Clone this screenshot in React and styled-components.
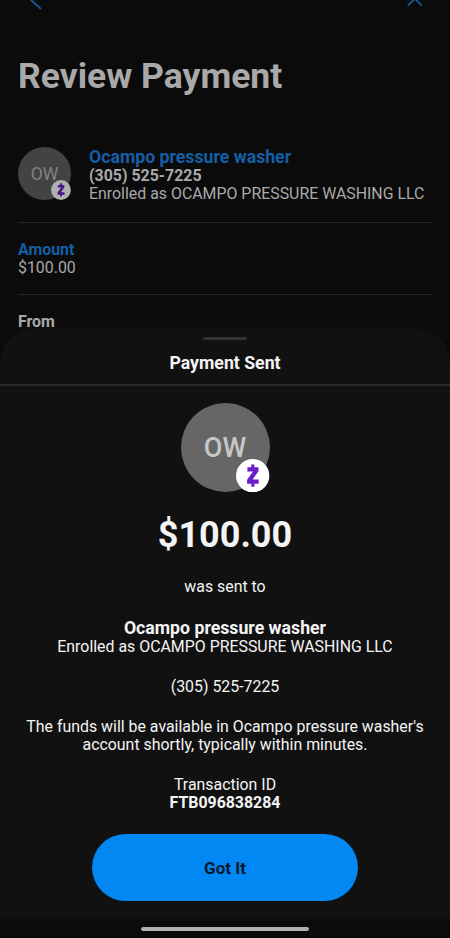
import React from "react";
import styled, { createGlobalStyle } from "styled-components";

const GlobalStyle = createGlobalStyle`
  * { box-sizing: border-box; }
  body { margin: 0; background: #0b0b0b; font-family: Roboto, sans-serif; }
  h1, h2, h3, p { margin: 0; }
`;

const Screen = styled.div`
  width: 450px;
  height: 938px;
  display: grid;
  grid-template-rows: 328px 591px 19px;
  background: #0b0b0b;
  overflow: hidden;
`;

const Review = styled.main`
  padding: 0 18px;
  color: #a9a9a9;
  overflow: hidden;
`;

const NavBar = styled.nav`
  height: 14px;
  padding: 0 8px 0 11px;
  display: flex;
  justify-content: space-between;
  color: #145a9c;
`;

const Title = styled.h1`
  margin-top: 39px;
  font-size: 35.5px;
  line-height: 46px;
  font-weight: 700;
  white-space: nowrap;
`;

const Recipient = styled.section`
  height: 124px;
  padding-top: 48px;
  display: flex;
  gap: 18px;
  border-bottom: 1px solid #232323;
`;

const RecipientText = styled.div`
  padding-top: 1px;
`;

const Field = styled.section`
  height: ${(p) => p.$height}px;
  padding-top: 18px;
  border-bottom: 1px solid #232323;
`;

const Line = styled.p`
  font-size: ${(p) => p.$size}px;
  line-height: ${(p) => p.$line || 18}px;
  font-weight: ${(p) => (p.$bold ? 700 : 400)};
  letter-spacing: ${(p) => p.$track || 0}px;
  color: ${(p) => (p.$link ? "#145fa5" : "inherit")};
  margin-top: ${(p) => p.$top || 0}px;
  white-space: nowrap;
`;

const AvatarCircle = styled.div`
  position: relative;
  flex: none;
  width: ${(p) => p.$size}px;
  height: ${(p) => p.$size}px;
  border-radius: 50%;
  display: grid;
  place-items: center;
  background: ${(p) => (p.$dim ? "#434343" : "#666666")};
  color: ${(p) => (p.$dim ? "#828282" : "#c8c8c8")};
  font-size: ${(p) => (p.$dim ? 17.5 : 27)}px;
  font-weight: ${(p) => (p.$dim ? 400 : 500)};
`;

const Badge = styled.svg`
  position: absolute;
  right: 0;
  bottom: 0;
  width: 37.5%;
  height: 37.5%;
`;

const Sheet = styled.section`
  border-radius: 36px 36px 0 0;
  background: #111111;
  color: #f4f4f4;
  display: flex;
  flex-direction: column;
  align-items: center;
  text-align: center;
`;

const SheetHeader = styled.header`
  width: 100%;
  height: 58px;
  flex: none;
  padding-top: 9px;
  display: flex;
  flex-direction: column;
  align-items: center;
  border-bottom: 2px solid #292929;
`;

const Handle = styled.div`
  width: 44px;
  height: 3px;
  border-radius: 2px;
  background: #333333;
`;

const SheetBody = styled.div`
  padding-top: 17px;
  display: flex;
  flex-direction: column;
  align-items: center;
`;

const Total = styled.h3`
  margin-top: 20px;
  font-size: 36px;
  line-height: 46px;
  font-weight: 700;
  letter-spacing: ${(p) => p.$track}px;
`;

const Confirm = styled.button`
  width: 266px;
  height: 67px;
  flex: none;
  margin-top: 22px;
  border: 0;
  padding: 0;
  border-radius: 34px;
  background: #0387f2;
  color: #07182d;
  font: 700 17px/20px Roboto, sans-serif;
`;

const GestureBar = styled.footer`
  display: flex;
  justify-content: center;
  padding-top: 8px;
`;

const Pill = styled.div`
  width: 168px;
  height: 4px;
  border-radius: 2px;
  background: #b0b0b0;
`;

function Avatar({ size, dim }) {
  return (
    <AvatarCircle $size={size} $dim={dim}>
      OW
      <Badge viewBox="0 0 34 34" aria-label="Zelle">
        <circle cx="17" cy="17" r="17" fill={dim ? "#b0b0b0" : "#ffffff"} />
        <path
          d="M15.5 5.5h3.2v3h4.2v4l-6 8.5h6.2v4.2h-4.3v3h-3.2v-3h-4.3v-4l6-8.5h-5.7V8.500h3.900z"
          fill={dim ? "#461587" : "#6b1ccb"}
        />
      </Badge>
    </AvatarCircle>
  );
}

export default function App() {
  return (
    <>
      <GlobalStyle />
      <Screen>
        <Review>
          <NavBar>
            <svg width="14" height="14" viewBox="0 0 14 14" aria-label="Back">
              <path d="M0-1 11 9" transform="translate(1 0)" fill="none" stroke="currentColor" strokeWidth="1.8" />
            </svg>
            <svg width="18" height="14" viewBox="0 0 18 14" aria-label="Close">
              <path d="M1.800 5.700 15.800-8.300M15.800 5.700 1.800-8.300" fill="none" stroke="currentColor" strokeWidth="1.8" />
            </svg>
          </NavBar>
          <Title>Review Payment</Title>
          <Recipient>
            <Avatar size={53} dim />
            <RecipientText>
              <Line $size={17.7} $line={19} $bold $link>Ocampo pressure washer</Line>
              <Line $size={15.9} $bold>(305) 525-7225</Line>
              <Line $size={15.9}>Enrolled as OCAMPO PRESSURE WASHING LLC</Line>
            </RecipientText>
          </Recipient>
          <Field $height={72}>
            <Line $size={15.9} $bold $link>Amount</Line>
            <Line $size={15.9}>$100.00</Line>
          </Field>
          <Field $height={72}>
            <Line $size={15.9} $bold>From</Line>
          </Field>
        </Review>
        <Sheet>
          <SheetHeader>
            <Handle />
            <Line as="h2" $size={17.7} $line={22} $top={12} $bold>Payment Sent</Line>
          </SheetHeader>
          <SheetBody>
            <Avatar size={89} />
            <Total>$100.00</Total>
            <Line $size={15.9} $top={20}>was sent to</Line>
            <Line $size={17.7} $line={20} $top={22} $bold>Ocampo pressure washer</Line>
            <Line $size={15.9}>Enrolled as OCAMPO PRESSURE WASHING LLC</Line>
            <Line $size={15.9} $top={22}>(305) 525-7225</Line>
            <Line $size={15.9} $top={22}>
              The funds will be available in Ocampo pressure washer's
              <br />
              account shortly, typically within minutes.
            </Line>
            <Line $size={15.9} $top={22}>Transaction ID</Line>
            <Line $size={15.9} $bold>FTB096838284</Line>
            <Confirm>Got It</Confirm>
          </SheetBody>
        </Sheet>
        <GestureBar>
          <Pill />
        </GestureBar>
      </Screen>
    </>
  );
}
